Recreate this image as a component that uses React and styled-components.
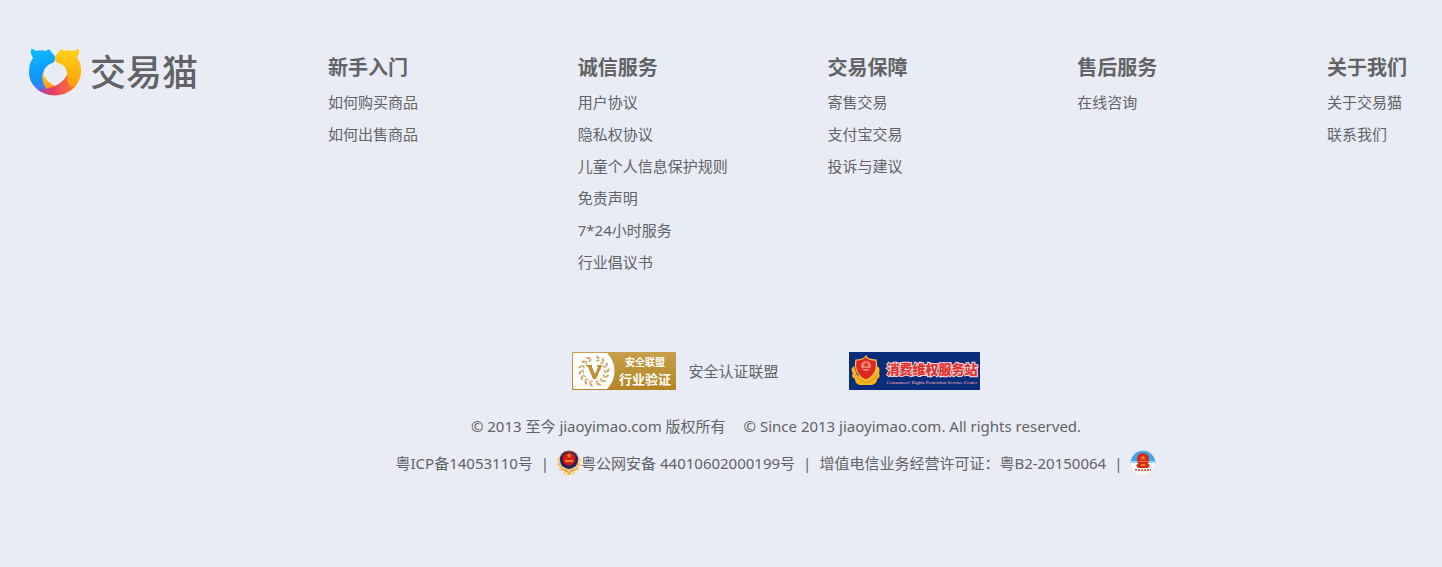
import React from "react";
import styled, { createGlobalStyle } from "styled-components";

const GlobalStyle = createGlobalStyle`
  * { box-sizing: border-box; }
  body {
    margin: 0;
    background: #e9ecf4;
    color: #616366;
    font-family: "Noto Sans", "Noto Sans CJK SC", sans-serif;
    font-size: 15px;
    line-height: 24px;
  }
`;

const Footer = styled.footer`
  padding: 48px 35px 92px 28px;
`;

const Top = styled.div`
  display: flex;
  align-items: flex-start;
  min-height: 304px;
`;

const Brand = styled.a`
  flex: none;
  display: flex;
  align-items: flex-start;
  gap: 8px;
  width: 300px;
  height: 48px;
  color: #616366;
  text-decoration: none;
  font-family: "Noto Sans CJK SC", sans-serif;
  font-size: 36px;
  font-weight: 500;
  line-height: 44px;
`;

const Columns = styled.nav`
  flex: 1;
  display: flex;
  justify-content: space-between;
  padding-top: 5px;
`;

const Column = styled.section`
  width: 80px;
  white-space: nowrap;
`;

const Title = styled.h2`
  margin: 0 0 3px;
  font-size: 20px;
  font-weight: 700;
  line-height: 30px;
`;

const List = styled.ul`
  margin: 0;
  padding: 0;
  list-style: none;
  line-height: 32px;
`;

const Link = styled.a`
  color: inherit;
  text-decoration: none;
`;

const Bottom = styled.div`
  display: flex;
  flex-direction: column;
  align-items: center;
  padding-left: 117px;
`;

const Badges = styled.div`
  display: flex;
  align-items: center;
  gap: 70px;
  height: 38px;
  margin-bottom: 24px;
`;

const BadgeLink = styled(Link)`
  display: flex;
  align-items: center;
  gap: 12px;
`;

const Copyright = styled.p`
  display: flex;
  gap: 18px;
  margin: 0 0 10px;
`;

const Records = styled.p`
  display: flex;
  align-items: center;
  gap: 8px;
  height: 30px;
  margin: 0;
  white-space: nowrap;
`;

const RecordLink = styled(Link)`
  display: flex;
  align-items: center;
`;

const Drawing = styled.svg`
  display: block;
  flex: none;
`;

const columns = [
  { title: "新手入门", links: ["如何购买商品", "如何出售商品"] },
  {
    title: "诚信服务",
    links: ["用户协议", "隐私权协议", "儿童个人信息保护规则", "免责声明", "7*24小时服务", "行业倡议书"],
  },
  { title: "交易保障", links: ["寄售交易", "支付宝交易", "投诉与建议"] },
  { title: "售后服务", links: ["在线咨询"] },
  { title: "关于我们", links: ["关于交易猫", "联系我们"] },
];

function CatLogo() {
  return (
    <Drawing width="54" height="48" viewBox="0 0 54 48" aria-hidden="true">
      <defs>
        <linearGradient id="catBlue" x1="0" y1="0" x2="0.2" y2="1">
          <stop offset="0" stopColor="#10bdff" />
          <stop offset="0.7" stopColor="#0c96ff" />
          <stop offset="1" stopColor="#5470ee" />
        </linearGradient>
        <linearGradient id="catGold" x1="0" y1="0" x2="0" y2="1">
          <stop offset="0" stopColor="#ffd21a" />
          <stop offset="0.6" stopColor="#ffae08" />
          <stop offset="1" stopColor="#ff8c18" />
        </linearGradient>
        <linearGradient id="catTail" x1="0" y1="0" x2="0" y2="1">
          <stop offset="0" stopColor="#ffd21a" />
          <stop offset="1" stopColor="#ff8a20" />
        </linearGradient>
        <linearGradient id="catRed" x1="0" y1="0" x2="1" y2="0">
          <stop offset="0" stopColor="#8b4fc4" />
          <stop offset="0.4" stopColor="#e63c66" />
          <stop offset="1" stopColor="#ff7f24" />
        </linearGradient>
      </defs>
      <path fill="url(#catBlue)" d="M3 2 C3 0 6 1 8 3 C12 2 15 2 18 3 C20 1 23 1 23 4 C25 6 27 7 27 10 C27 14 25 15 22 16 C18 18 15 22 15 28 C16 34 20 40 26 46 C12 47 1 37 1 24 C1 18 2 14 5 10 C4 7 2 5 3 2Z" />
      <path fill="url(#catGold)" d="M51 2 C51 0 49 1 46 3 C42 2 39 2 36 3 C34 1 31 1 31 4 C29 6 27 7 27 10 C27 14 29 15 33 16 C37 18 39 22 39 26 C38 35 33 42 26 46 C41 48 53 37 53 23 C53 18 52 13 49 10 C50 7 52 5 51 2Z" />
      <path fill="url(#catTail)" d="M15 24 C16 30 20 34 27 38 L20 43 C15 37 13 30 15 24Z" />
      <path fill="url(#catRed)" d="M9 41 C21 42 34 37 39 27 C39 35 42 40 47 38 C38 50 19 50 9 41Z" />
    </Drawing>
  );
}

const leafAngles = [20, 44, 68, 92, 116, 140, 164, 196, 220, 244, 268, 292, 316, 340];

function SafetyBadge() {
  return (
    <Drawing width="104" height="38" viewBox="0 0 104 38" role="img" aria-label="安全联盟行业验证">
      <defs>
        <linearGradient id="goldPlate" x1="0" y1="0" x2="0" y2="1">
          <stop offset="0" stopColor="#c8a04a" />
          <stop offset="1" stopColor="#b28423" />
        </linearGradient>
      </defs>
      <rect width="104" height="38" rx="1" fill="url(#goldPlate)" />
      <path fill="#fff" d="M2 1 H35 C45 11 45 27 35 37 H2 Q1 37 1 36 V2 Q1 1 2 1Z" />
      <g fill="#c9a861">
        {leafAngles.map((angle) => (
          <g key={angle} transform={`rotate(${angle} 22 19)`}>
            <ellipse cx="21" cy="5" rx="2.4" ry="1.1" transform="rotate(35 21 5)" />
            <ellipse cx="22" cy="8" rx="2" ry="0.8" transform="rotate(-30 22 8)" />
          </g>
        ))}
      </g>
      <path fill="#bd9135" d="M14 13 H20 V15 L23 22 L26 15 L25 14 V13 H30 V14 L24 27 H21 L16 15 L14 14Z" />
      <g fill="#fff" fontFamily="'Noto Sans CJK SC', sans-serif" fontWeight="700" textAnchor="middle">
        <text x="73" y="14" fontSize="10">安全联盟</text>
        <text x="73" y="32" fontSize="13">行业验证</text>
      </g>
    </Drawing>
  );
}

function ConsumerBadge() {
  return (
    <Drawing width="131" height="38" viewBox="0 0 131 38" role="img" aria-label="消费维权服务站">
      <rect width="131" height="38" fill="#092c7b" />
      <path fill="#f8b51e" d="M5 14 C2 16 2 19 4 21 C2 24 4 26 6 27 C6 31 9 33 12 33 H21 C25 33 28 31 28 27 C31 26 31 23 30 21 C31 18 31 16 28 14 L25 23 L17 28 L8 23Z" />
      <path fill="#dd2820" stroke="#f7c44a" strokeWidth="1.2" d="M17 4 C18 7 23 8 27 8 C29 17 25 25 17 28 C9 25 5 17 7 8 C11 8 15 7 17 4Z" />
      <circle cx="17" cy="14" r="5" fill="#f08468" />
      <path fill="#d92b24" d="M17 10 L18 12 H20 L18 13 L19 15 L17 14 L15 15 L16 13 L14 12 H16Z M13 16 H21 V17 H13Z M14 20 H20 V21 H14Z" />
      <path stroke="#d99210" fill="none" d="M6 23 C8 28 13 28 17 31 C21 28 26 28 28 23" />
      <text
        x="83" y="22" fontSize="13" fontWeight="900" textAnchor="middle"
        fontFamily="'Noto Sans CJK SC', sans-serif" fill="#e2332f" stroke="#f7d9de" strokeWidth="2" paintOrder="stroke"
      >
        消费维权服务站
      </text>
      <text x="83" y="32" fontSize="5" textAnchor="middle" fontFamily="'Liberation Serif', serif" fill="#ffb9bf">
        Consumers' Rights Protection Service Center
      </text>
    </Drawing>
  );
}

function PoliceBadge() {
  return (
    <Drawing width="24" height="26" viewBox="0 0 24 26" aria-hidden="true">
      <path fill="#f1c26b" d="M3 6 L0 10 L2 12 L0 15 L3 17 L2 20 L6 21 L7 25 H17 L18 21 L22 20 L21 17 L24 15 L22 12 L24 10 L21 6 L18 18 H6Z" />
      <path fill="#f7dc9a" d="M4 18 L11 22 V25 H8 L6 21 L3 20Z M20 18 L13 22 V25 H16 L18 21 L21 20Z" />
      <path fill="#23235f" d="M12 1 C18 1 21 4 21 9 C21 15 18 18 12 19 C6 18 3 15 3 9 C3 4 6 1 12 1Z" />
      <path fill="none" stroke="#a87145" d="M4 6 C6 2 9 1 12 1 C15 1 18 2 20 6" />
      <circle cx="12" cy="9" r="6.4" fill="#d71b17" />
      <path fill="#f0862c" d="M12 3 L13 5 H15 L13 6 L14 8 L12 7 L10 8 L11 6 L9 5 H11Z M8 10 H16 V12 H8Z" />
      <path fill="none" stroke="#d29b46" d="M4 19 L11 22 M20 19 L13 22 M8 20 L12 24 L16 20" />
    </Drawing>
  );
}

function BusinessBadge() {
  return (
    <Drawing width="26" height="26" viewBox="0 0 26 26" aria-hidden="true">
      <defs>
        <clipPath id="sealClip"><circle cx="13" cy="13" r="12.5" /></clipPath>
      </defs>
      <g clipPath="url(#sealClip)">
        <rect width="26" height="26" fill="#fbf7f7" />
        <path fill="#3da5ef" d="M0 0 H26 V13 H0Z" />
        <path fill="#9bd0f2" d="M0 11 H26 V13 H0Z" />
      </g>
      <path fill="#d52b18" d="M13 3 C17 3 19 6 19 9 L18 14 L20 15 L18 18 H8 L6 15 L8 14 L7 9 C7 6 9 3 13 3Z" />
      <path fill="#f18a2b" d="M13 5 L14 7 H16 L14 8 L15 10 L13 9 L11 10 L12 8 L10 7 H12Z M9 11 H17 V12 H9Z M11 14 H15 V16 H11Z" />
      <path stroke="#d0705a" strokeWidth="2" strokeDasharray="2 1" d="M5 20 H21" />
      <circle cx="13" cy="13" r="12.5" fill="none" stroke="#d9dfe8" strokeWidth="0.5" />
    </Drawing>
  );
}

export default function App() {
  return (
    <>
      <GlobalStyle />
      <Footer>
        <Top>
          <Brand href="#">
            <CatLogo />
            交易猫
          </Brand>
          <Columns aria-label="页脚导航">
            {columns.map(({ title, links }) => (
              <Column key={title}>
                <Title>{title}</Title>
                <List>
                  {links.map((label) => (
                    <li key={label}><Link href="#">{label}</Link></li>
                  ))}
                </List>
              </Column>
            ))}
          </Columns>
        </Top>
        <Bottom>
          <Badges>
            <BadgeLink href="#"><SafetyBadge />安全认证联盟</BadgeLink>
            <BadgeLink href="#"><ConsumerBadge /></BadgeLink>
          </Badges>
          <Copyright>
            <span>© 2013 至今 jiaoyimao.com 版权所有</span>
            <span>© Since 2013 jiaoyimao.com. All rights reserved.</span>
          </Copyright>
          <Records>
            <RecordLink href="#">粤ICP备14053110号</RecordLink>
            <span>|</span>
            <RecordLink href="#"><PoliceBadge />粤公网安备 44010602000199号</RecordLink>
            <span>|</span>
            <RecordLink href="#">增值电信业务经营许可证：粤B2-20150064</RecordLink>
            <span>|</span>
            <RecordLink href="#" aria-label="工商网监"><BusinessBadge /></RecordLink>
          </Records>
        </Bottom>
      </Footer>
    </>
  );
}
